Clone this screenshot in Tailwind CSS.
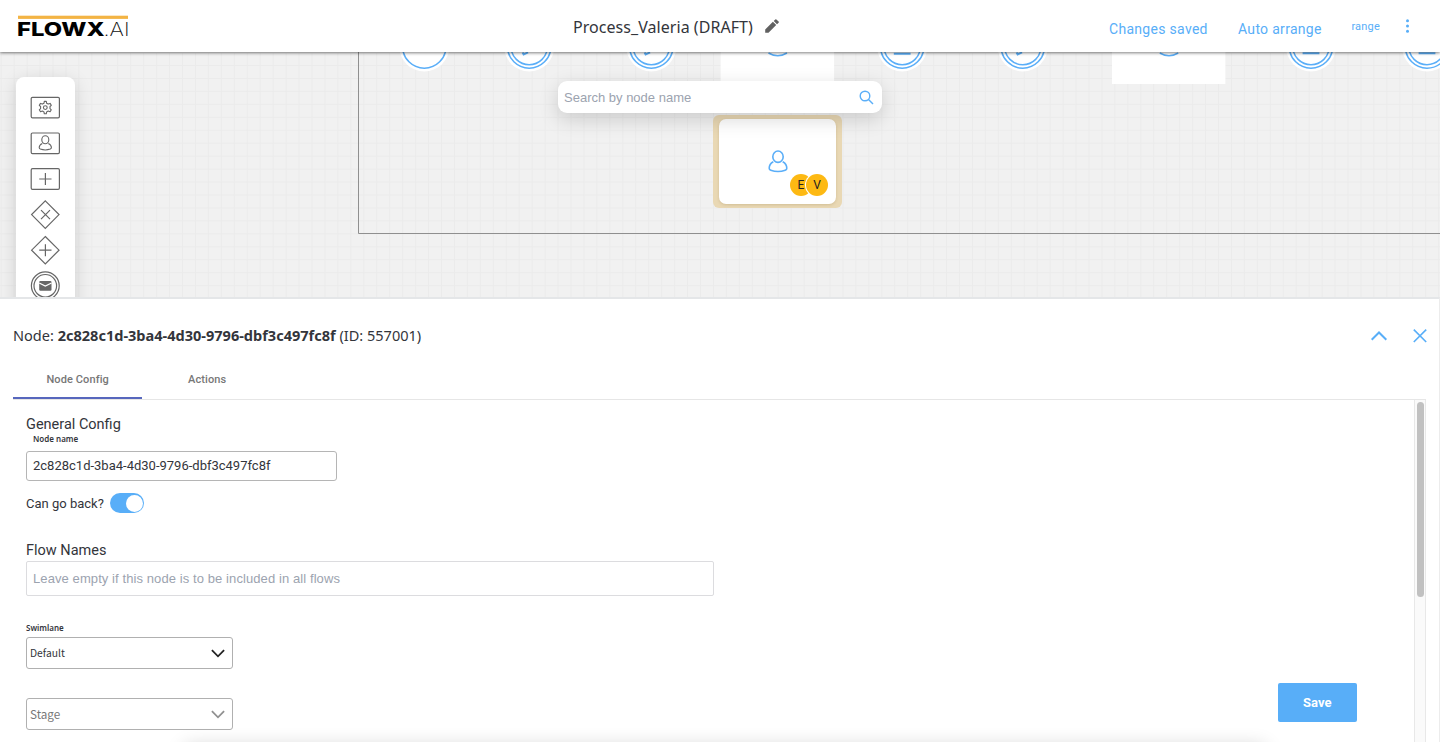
<!DOCTYPE html>
<html lang="en">
<head>
<meta charset="utf-8">
<title>Process_Valeria</title>
<script src="https://cdn.jsdelivr.net/npm/@tailwindcss/browser@4"></script>
</head>
<body class="h-[742px] w-[1440px] overflow-hidden bg-white font-['Roboto',sans-serif] text-[#33353b]">
<div class="flex h-[742px] w-[1440px] flex-col overflow-hidden">

  <header class="relative z-20 flex h-[52px] shrink-0 items-center bg-white shadow-[0_1px_3px_rgba(0,0,0,0.5)]">
    <div class="w-[573px] shrink-0 pl-[17px]">
      <svg class="block overflow-visible" width="116" height="26" viewBox="0 0 116 26">
        <rect x="1" y="2.700" width="110" height="3.200" fill="#f3b444"/>
        <text x="0" y="23.400" font-family="Inter, sans-serif" font-weight="800" font-size="19.200" textLength="87.500" lengthAdjust="spacingAndGlyphs" fill="#000">FLOWX</text>
        <text x="86.500" y="23.400" font-family="Inter, sans-serif" font-weight="200" font-size="19.200" textLength="26" lengthAdjust="spacingAndGlyphs" fill="#111">.AI</text>
      </svg>
    </div>
    <div class="flex w-[536px] shrink-0 items-center gap-[12.500px]">
      <h1 class="mt-[2px] font-['Noto_Sans',sans-serif] text-[16px] leading-6 tracking-[0.05px] whitespace-nowrap text-[#33353b]">Process_Valeria (DRAFT)</h1>
      <svg width="14" height="14" viewBox="0 0 14 14" fill="#616161"><path d="M.2 10.500 7.900 2.800 11.200 6.100 3.500 13.800H.2zM13.600 3.700l-1.600 1.600L8.700 2 10.300.4a.8.8 0 0 1 1.100 0l2.200 2.200a.8.8 0 0 1 0 1.100z"/></svg>
    </div>
    <nav class="flex items-center text-[#58aef8]">
      <span class="mt-[6px] w-[129px] text-[14px] tracking-[0.3px] whitespace-nowrap">Changes saved</span>
      <span class="mt-[6px] w-[114px] text-[14px] tracking-[0.3px] whitespace-nowrap">Auto arrange</span>
      <span class="mt-[2px] flex w-[28px] justify-end overflow-hidden text-[11px] tracking-[0.2px] whitespace-nowrap">range</span>
      <svg class="ml-[25px]" width="5" height="14" viewBox="0 0 5 14" fill="#58aef8"><circle cx="2.500" cy="1.700" r="1.500"/><circle cx="2.500" cy="7" r="1.500"/><circle cx="2.500" cy="12.300" r="1.500"/></svg>
    </nav>
  </header>

  <main class="relative h-[245px] shrink-0 overflow-hidden bg-[#f1f1f1]">
    <svg class="absolute inset-0" width="1440" height="245" viewBox="0 52 1440 245" fill="none">
      <defs>
        <pattern id="grid" x="0.700" y="65" width="12.950" height="12.950" patternUnits="userSpaceOnUse"><path d="M.5 0V12.950M0 .5H12.950" stroke="#ebebeb"/></pattern>
      </defs>
      <rect y="52" width="1440" height="245" fill="url(#grid)"/>
      <path d="M358.500 52V233.500H1440" stroke="#8f8f8f"/>
      <g fill="#fff">
        <circle cx="424.300" cy="46.500" r="25"/><circle cx="529.200" cy="46.500" r="25"/><circle cx="651.300" cy="46.500" r="25"/><circle cx="902.200" cy="46.500" r="25"/><circle cx="1022.800" cy="46.500" r="25"/><circle cx="1311" cy="46.500" r="25"/><circle cx="1427" cy="46.500" r="25"/>
        <rect x="720.600" y="30" width="113.500" height="54"/><rect x="1112" y="30" width="113.400" height="54"/>
      </g>
      <g stroke="#5aaef8" stroke-width="1.500">
        <circle cx="424.300" cy="46.500" r="21.700"/>
        <circle cx="529.200" cy="46.500" r="21.700"/><circle cx="529.200" cy="46.500" r="18.200"/>
        <circle cx="651.300" cy="46.500" r="21.700"/><circle cx="651.300" cy="46.500" r="18.200"/>
        <circle cx="902.200" cy="46.500" r="21.700"/><circle cx="902.200" cy="46.500" r="18.200"/>
        <circle cx="1022.800" cy="46.500" r="21.700"/><circle cx="1022.800" cy="46.500" r="18.200"/>
        <circle cx="1311" cy="46.500" r="21.700"/><circle cx="1311" cy="46.500" r="18.200"/>
        <circle cx="1427" cy="46.500" r="21.700"/><circle cx="1427" cy="46.500" r="18.200"/>
        <path d="M768.500 53Q777.700 58.500 787 53M1159.800 53Q1169 58.500 1178.200 53"/>
        <path stroke-width="1.900" d="M522.600 52.500l1 1.900 4.500-2M644.600 52.500l1 1.900 4.500-2M1016.600 52.500l1 1.900 4.500-2M893.800 53.800h16.800M1302.600 53.300h16.800M1418.600 53.300h16.800"/>
      </g>
    </svg>

    <div class="absolute top-[63px] left-[713px] h-[93px] w-[129px] rounded-[6px] bg-[#e9d8b4] px-[6px] py-[4px]">
      <div class="relative h-[84.500px] w-[117px] rounded-[7px] bg-white shadow-[0_1px_3px_rgba(120,90,30,0.2)]">
        <svg class="absolute top-[31px] left-[49px]" width="20" height="23" viewBox="0 0 20 23" fill="none" stroke="#5aaef8" stroke-width="1.600"><ellipse cx="10" cy="6.700" rx="5.200" ry="5.700"/><path d="M5.300 11.800C2.500 13.300 1.200 15.500 1.200 18.200c0 1.200.5 1.600 1.600 2 4 1.500 10.400 1.500 14.400 0 1.100-.4 1.600-.8 1.600-2 0-2.700-1.300-4.900-4.100-6.400"/></svg>
        <div class="absolute top-[55px] left-[71px] flex text-[12px] text-[#222]">
          <span class="flex size-[22px] items-center justify-center rounded-full bg-[#fdb913]">E</span>
          <span class="-ml-[6px] flex size-[22px] items-center justify-center rounded-full bg-[#fdb913] shadow-[0_0_0_1px_#fff]">V</span>
        </div>
      </div>
    </div>

    <div class="absolute top-[29px] left-[557.500px] flex h-[32px] w-[324px] items-center justify-between rounded-[9px] bg-white pr-[7.500px] pl-[6.500px] shadow-[0_6px_20px_rgba(0,0,0,0.16)]">
      <span class="mt-px font-['Liberation_Sans',sans-serif] text-[13px] text-[#9ca3af]">Search by node name</span>
      <svg width="15" height="15" viewBox="0 0 15 15" fill="none" stroke="#5aaef8" stroke-width="1.400"><circle cx="6" cy="6" r="4.800"/><path d="m9.500 9.500 4.500 4.500"/></svg>
    </div>

    <aside class="absolute top-[25px] left-[16px] h-[260px] w-[58.500px] rounded-[8px] bg-white pt-[15px] pl-[14px] shadow-[0_4px_18px_rgba(0,0,0,0.14)]">
      <svg width="32" height="210" viewBox="0 0 32 210" fill="none" stroke="#666" stroke-width="1.200">
        <rect x="1.200" y="5.300" width="28.200" height="20.600" rx="1.300"/>
        <path stroke-linejoin="round" stroke-width="1.100" d="M14 11.200 14.300 9.400h2l.3 1.800 1.600.9 1.900-.7 1.200 1.900-1.300 1.200v2.100l1.300 1.200-1.200 1.900-1.900-.7-1.600.9-.3 1.900h-2l-.3-1.900-1.600-.9-1.900.7-1.200-1.900 1.300-1.200v-2.100l-1.300-1.200 1.200-1.900 1.900.7z"/><circle cx="15.300" cy="15.600" r="1.900" stroke-width="1.100"/>
        <rect x="1.200" y="41" width="28.200" height="20.600" rx="1.300"/>
        <ellipse cx="15.300" cy="47.700" rx="3.500" ry="4" stroke-width="1.100"/><path stroke-width="1.100" d="M12.300 51.400C10.200 52.300 9.200 53.800 9.200 55.600c0 .8.300 1.200 1.100 1.500 2.900 1 7.100 1 10 0 .8-.3 1.100-.7 1.100-1.500 0-1.800-1-3.300-3.100-4.200"/>
        <rect x="1.200" y="76.700" width="28.200" height="20.600" rx="1.300"/>
        <path d="M15.400 81v12M9.200 87h12.300"/>
        <path d="M15.300 108.900 29 122.600 15.300 136.300 1.600 122.600zM11 118.100l9 9M20 118.100l-9 9"/>
        <path d="M15.300 144.500 29 158.200 15.300 171.900 1.600 158.200zM15.400 152.200v12M9.200 158.200h12.300"/>
        <circle cx="15.300" cy="193.800" r="13.900"/><circle cx="15.300" cy="193.800" r="11.300"/>
        <rect x="9.200" y="188.900" width="12.300" height="9.900" rx="1.200" fill="#666" stroke="none"/><path d="m9.200 191 6.100 3.100 6.200-3.100" stroke="#fff" stroke-width="1.200"/>
      </svg>
    </aside>
  </main>

  <section class="flex min-h-0 flex-1 flex-col border-t-2 border-r border-t-[#e4e6e8] border-r-[#ececec] bg-white pr-[13px] pl-[13px]">
    <div class="flex h-[66px] shrink-0 items-center justify-between pt-[8px]">
      <h2 class="font-['Noto_Sans',sans-serif] text-[14.540px] whitespace-nowrap">Node: <b>2c828c1d-3ba4-4d30-9796-dbf3c497fc8f</b> (ID: 557001)</h2>
      <div class="-mr-[0.500px] flex items-center gap-[25.500px]">
        <svg width="16" height="14" viewBox="0 0 16 14" fill="none" stroke="#58aef8" stroke-width="2"><path d="m.7 10.800 7.300-7.300 7.300 7.300"/></svg>
        <svg width="14" height="14" viewBox="0 0 14 14" fill="none" stroke="#58aef8" stroke-width="1.600"><path d="m.8.6 12.400 12.400M13.200.6.8 13"/></svg>
      </div>
    </div>
    <div class="flex h-[35px] shrink-0 border-b border-[#e6e6e6] text-[11px] font-medium tracking-[0.1px] text-[#777]">
      <div class="flex w-[129.400px] justify-center border-b-2 border-[#5767bd] pt-[7px]">Node Config</div>
      <div class="flex w-[129.500px] justify-center pt-[7px]">Actions</div>
    </div>

    <div class="flex min-h-0 flex-1">
      <div class="relative flex flex-1 flex-col items-start overflow-hidden pl-[13px]">
        <h3 class="mt-[16px] h-[17px] text-[14.500px] leading-[18px]">General Config</h3>
        <label class="ml-[7px] h-[12px] font-['Noto_Sans',sans-serif] text-[8px] leading-[12px] font-semibold">Node name</label>
        <div class="mt-[6px] flex h-[30px] w-[311px] items-center rounded-[3px] border border-[#b5b5b5] pl-[6px] text-[13px]">2c828c1d-3ba4-4d30-9796-dbf3c497fc8f</div>
        <div class="mt-[12px] flex h-[20px] items-center gap-[6px] text-[13px]">
          <span class="mt-px whitespace-nowrap">Can go back?</span>
          <span class="flex h-[20px] w-[34px] items-center justify-end rounded-full bg-[#58aef8] pr-[1px]"><span class="size-[17px] rounded-full bg-white"></span></span>
        </div>
        <h3 class="mt-[29px] h-[18px] text-[14.500px] leading-[18px]">Flow Names</h3>
        <div class="mt-[1px] flex h-[35px] w-[688px] items-center rounded-[2px] border border-[#dcdcdf] pl-[6px] font-['Liberation_Sans',sans-serif] text-[13px] tracking-[0.090px] text-[#9ca3af]">Leave empty if this node is to be included in all flows</div>
        <label class="mt-[26px] h-[12px] font-['Noto_Sans',sans-serif] text-[8px] leading-[12px] font-semibold">Swimlane</label>
        <div class="mt-[3px] flex h-[32px] w-[207px] shrink-0 items-center justify-between rounded-[3px] border border-[#b0b0b0] pr-[7px] pl-[3px] font-['Noto_Sans_CJK_SC',sans-serif] text-[10.300px]">Default
          <svg width="14" height="9" viewBox="0 0 14 9" fill="none" stroke="#222" stroke-width="1.800"><path d="m.9 1.200 6.100 6.100 6.100-6.100"/></svg></div>
        <div class="mt-[29px] flex h-[32px] w-[207px] shrink-0 items-center justify-between rounded-[3px] border border-[#b0b0b0] pr-[7px] pl-[3px] font-['Noto_Sans_CJK_SC',sans-serif] text-[11.700px] text-[#777]">Stage
          <svg width="14" height="9" viewBox="0 0 14 9" fill="none" stroke="#909090" stroke-width="1.800"><path d="m.9 1.200 6.100 6.100 6.100-6.100"/></svg></div>
        <div class="absolute top-[347px] left-[172px] h-[20px] w-[1080px] shadow-[0_0_20px_rgba(0,0,0,0.2)]"></div>
        <button class="absolute right-[57px] bottom-[20.500px] h-[38.500px] w-[79.500px] rounded-[2px] bg-[#58aef8] pt-px text-[13px] font-bold text-white">Save</button>
      </div>
      <div class="w-[12px] shrink-0 border-x border-[#e8e8e8] bg-[#fafafa] pt-[2px] pl-[2px]"><div class="h-[195px] w-[6.500px] rounded-full bg-[#c1c1c1]"></div></div>
    </div>
  </section>
</div>
</body>
</html>
